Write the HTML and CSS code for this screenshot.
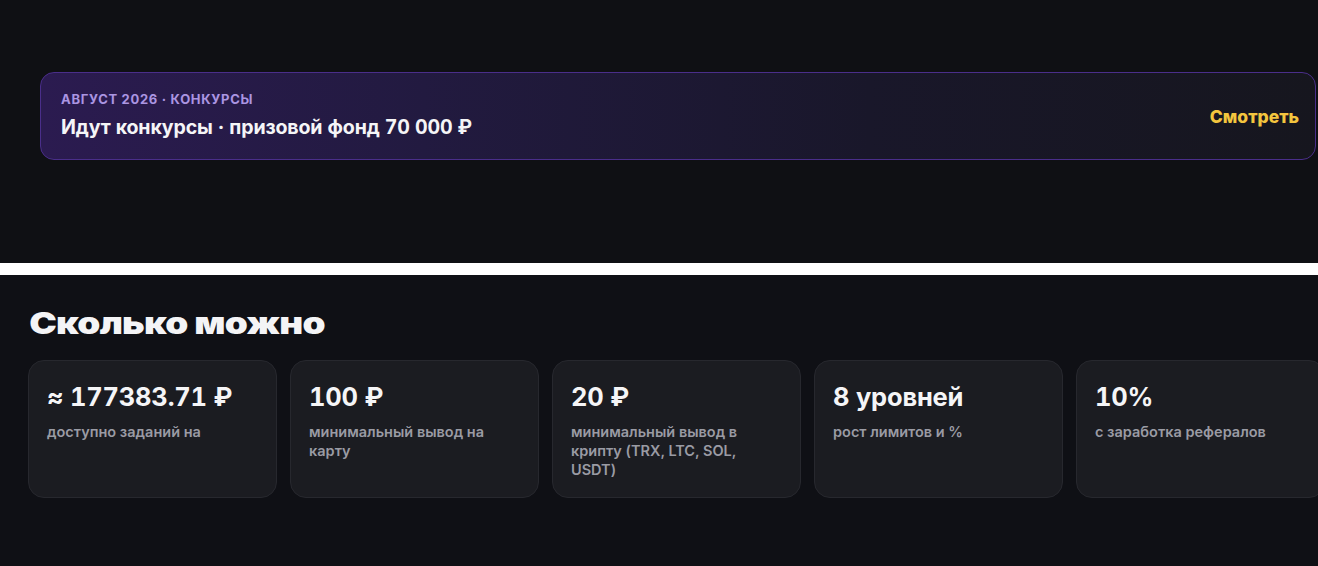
FILE: index.html
```html
<!DOCTYPE html>
<html lang="ru">
<head>
<meta charset="utf-8">
<title>Конкурсы</title>
<link rel="stylesheet" href="styles.css">
</head>
<body>
<section class="top">
  <div class="banner">
    <div class="banner-text">
      <div class="banner-label">АВГУСТ 2026 · КОНКУРСЫ</div>
      <div class="banner-title">Идут конкурсы · призовой фонд 70 000 ₽</div>
    </div>
    <a class="banner-link" href="#">Смотреть</a>
  </div>
</section>
<div class="divider"></div>
<section class="bottom">
  <h2 class="heading"><span class="heading-inner">Сколько можно</span></h2>
  <div class="cards">
    <div class="card">
      <div class="card-value">≈ 177383.71 ₽</div>
      <div class="card-desc">доступно заданий на</div>
    </div>
    <div class="card">
      <div class="card-value">100 ₽</div>
      <div class="card-desc">минимальный вывод на карту</div>
    </div>
    <div class="card">
      <div class="card-value">20 ₽</div>
      <div class="card-desc">минимальный вывод в крипту (TRX, LTC, SOL, USDT)</div>
    </div>
    <div class="card">
      <div class="card-value">8 уровней</div>
      <div class="card-desc">рост лимитов и %</div>
    </div>
    <div class="card">
      <div class="card-value">10%</div>
      <div class="card-desc">с заработка рефералов</div>
    </div>
  </div>
</section>
</body>
</html>
```

FILE: styles.css
```css
* { box-sizing: border-box; }
html, body {
  margin: 0;
  padding: 0;
  width: 1318px;
  height: 566px;
  overflow: hidden;
  background: #ffffff;
  font-family: Inter, "Noto Sans", sans-serif;
  -webkit-font-smoothing: antialiased;
}
.top {
  height: 263px;
  background: #0f1014;
  padding: 72px 2px 0 40px;
}
.banner {
  height: 88px;
  border: 1px solid #4a2e8a;
  border-radius: 14px;
  background: linear-gradient(90deg, #2b1b50 0%, #221a40 30%, #19172a 65%, #16161e 100%);
  display: flex;
  align-items: center;
  justify-content: space-between;
  padding: 0 16px 2px 20px;
}
.banner-text { display: flex; flex-direction: column; }
.banner-label {
  font-size: 13px;
  line-height: 16px;
  font-weight: 700;
  letter-spacing: 0.7px;
  color: #ab95e2;
}
.banner-title {
  margin-top: 8px;
  font-size: 19.6px;
  line-height: 24px;
  font-weight: 700;
  color: #f5f5f7;
  letter-spacing: -0.15px;
  font-variant-numeric: tabular-nums;
}
.banner-link {
  font-size: 17.5px;
  font-weight: 800;
  color: #f3c53e;
  text-decoration: none;
  margin-top: 2px;
}
.divider { height: 12px; background: #ffffff; }
.bottom {
  height: 291px;
  background: #0f1015;
  padding: 30px 0 0 28px;
}
.heading {
  margin: 0;
  height: 55px;
  font-size: 30px;
  line-height: 36px;
  font-weight: 900;
  color: #f4f4f6;
  letter-spacing: -0.6px;
}
.heading-inner {
  display: inline-block;
  transform: scaleX(1.23);
  transform-origin: left center;
  padding-left: 1px;
}
.cards {
  display: grid;
  grid-template-columns: repeat(5, 249px);
  gap: 13px;
}
.card {
  height: 138px;
  background: #1b1c21;
  border: 1px solid #27282e;
  border-radius: 16px;
  padding: 21px 18px 0 18px;
}
.card-value {
  font-size: 25.5px;
  line-height: 30px;
  font-weight: 700;
  color: #f5f5f7;
  letter-spacing: -0.2px;
  font-variant-numeric: tabular-nums;
}
.card-desc {
  margin-top: 10px;
  font-size: 14.5px;
  line-height: 19px;
  font-weight: 600;
  color: #9a9ba4;
}
```
